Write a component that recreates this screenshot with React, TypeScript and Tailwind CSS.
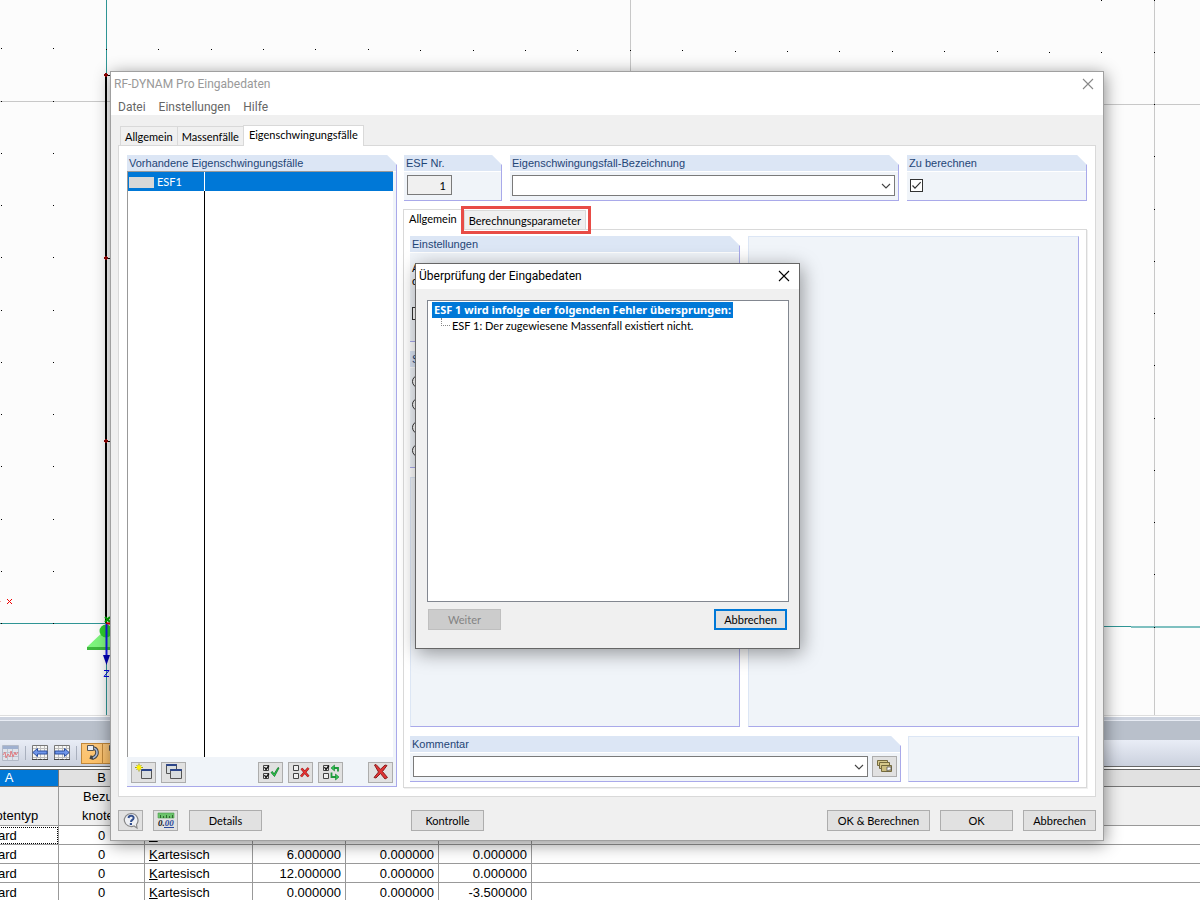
import React, { useState } from 'react';
import clsx from 'clsx';

interface NodeRow {
  type: string;
  ref: number;
  system: string;
  x: string;
  y: string;
  z: string;
}

const ROWS: NodeRow[] = [
  { type: 'Standard', ref: 0, system: 'Kartesisch', x: '0.000000', y: '0.000000', z: '0.000000' },
  { type: 'Standard', ref: 0, system: 'Kartesisch', x: '6.000000', y: '0.000000', z: '0.000000' },
  { type: 'Standard', ref: 0, system: 'Kartesisch', x: '12.000000', y: '0.000000', z: '0.000000' },
  { type: 'Standard', ref: 0, system: 'Kartesisch', x: '0.000000', y: '0.000000', z: '-3.500000' },
];

const MAIN_TABS = ['Allgemein', 'Massenfälle', 'Eigenschwingungsfälle'];
const SOLVERS = ['Lanczos', 'Polynom', 'Unterraum', 'ICG'];

// grid dots of the work plane, slightly tilted to the right
const DOTS = Array.from({ length: 13 }, (_, row) =>
  Array.from({ length: 23 }, (_, col) => ({
    x: Math.round(1 + col * 52.4),
    y: Math.round(-4 + row * 52.25 + col * 0.17),
  }))
).flat();

const Canvas: React.FC = () => (
  <svg className="block h-full w-full" shapeRendering="crispEdges" aria-hidden="true">
    <path d="M0 101.500H110M1103 104.500H1200M630.500 0V80M1154.500 0V715" stroke="#c8c8c8" />
    <path d="M0 623.500H110M106.500 0V75M106.500 660V715M1103 626.500H1132" stroke="#2f9595" />
    <path d="M1131 627H2400" stroke="#7fc0c0" strokeWidth="2" />
    {DOTS.map((d) => (
      <rect key={`${d.x}-${d.y}`} x={d.x} y={d.y} width="1" height="1" fill="#000" />
    ))}
    <path d="M106 75V623" stroke="#000" strokeWidth="2" />
    {[75, 258, 441].map((y) => (
      <g key={y}>
        <path d={`M106 ${y + 0.5}h6`} stroke="#000" />
        <path d={`M105 ${y - 2}h2v1h1v2h-1v1h-2v-1h-1v-2h1z`} fill="#8b0000" />
      </g>
    ))}
    <g shapeRendering="geometricPrecision">
      <path d="M106 629 87 647v2h30v-2z" fill="#7df57d" />
      <path d="M87 647h30v3H87z" fill="#3db83d" />
      <circle cx="106" cy="631" r="6.500" fill="#2ecc2e" />
      <path d="M105 617l5 5m0-5l-5 5" stroke="#0a0" strokeWidth="2" />
      <path d="M106 623.500h6" stroke="#e00000" strokeWidth="2" />
      <path d="M106.500 624v34" stroke="#1414f0" strokeWidth="2" />
      <path d="M103 655h7l-3.500 10z" fill="#0000b4" />
    </g>
    <path d="M0 601.500h1" stroke="#f3a0a0" />
    <path d="M7 599l5 5m0-5l-5 5" stroke="#f00000" shapeRendering="auto" />
    <path d="M104 670.500h5l-5 6h5" fill="none" stroke="#0000e0" shapeRendering="auto" />
  </svg>
);

const ChartIcon: React.FC = () => (
  <svg width="17" height="17" viewBox="0 0 17 17" aria-hidden="true">
    <path d="M.5.5h16v15H.5z" fill="#dfe3ea" stroke="#b3bac8" />
    <path d="M1 1h15v3H1z" fill="#9fb0cf" />
    <path d="M1 7.500h15M1 11.500h15M5.500 4v11M10.500 4v11" stroke="#bcc3cf" />
    <path d="M1 10l2-3 1 6 2-4 2 3 1-6 2 6 2-5 1 3 2-3" fill="none" stroke="#e07d82" />
  </svg>
);

const TableArrowIcon: React.FC<{ back?: boolean }> = ({ back }) => (
  <svg width="16" height="16" viewBox="0 0 16 16" aria-hidden="true">
    <path d="M.5.500h15v14H.5z" fill="#f6f6f4" stroke="#777" />
    <path d="M1 3.500h14M1 12.500h14M4.500 1v13M8.500 1v13M12.500 1v13" stroke="#bdbdbd" />
    <path d="M0 14.500h5M6 14.500h4M11 14.500h5" stroke="#444" />
    <path
      d={back ? 'M.8 7.500L5.500 3.500v2.500h9.500v3H5.500v2.500z' : 'M15.200 7.500L10.500 3.500v2.500H1v3h9.500v2.500z'}
      fill="#6f96ea"
      stroke="#2d4f9f"
    />
  </svg>
);

const LinkIcon: React.FC = () => (
  <svg width="20" height="20" viewBox="0 0 20 20" aria-hidden="true">
    <path d="M10 5c6 0 7 7 1 10l-3-1" fill="none" stroke="#444" strokeWidth="3.600" />
    <path d="M10 5c6 0 7 7 1 10" fill="none" stroke="#a9bbda" strokeWidth="1.600" />
    <path d="M5.500 2.500h6v5h-6z" fill="#e6ecf6" stroke="#555" />
  </svg>
);

const NewIcon: React.FC = () => (
  <svg width="18" height="18" viewBox="0 0 18 18" aria-hidden="true">
    <path d="M6.500 6.500h10v9h-10z" fill="#d9dddf" stroke="#555" />
    <path d="M6.500 6.500h10v1h-10z" fill="#3556a8" stroke="#2c468a" />
    <path d="M4 .5v8M0 4.500h8M1.500 2l5 5M6.500 2l-5 5" stroke="#a3a000" />
    <circle cx="4" cy="4.500" r="2.300" fill="#fff200" />
  </svg>
);

const CopyIcon: React.FC = () => (
  <svg width="18" height="18" viewBox="0 0 18 18" aria-hidden="true">
    <path d="M1.500 1.500h10v9h-10z" fill="#d9dddf" stroke="#555" />
    <path d="M1.500 1.500h10v1h-10z" fill="#3556a8" stroke="#2c468a" />
    <path d="M5.500 6.500h11v9h-11z" fill="#d9dddf" stroke="#555" />
    <path d="M5.500 6.500h11v1h-11z" fill="#3556a8" stroke="#2c468a" />
  </svg>
);

const CheckPair: React.FC<{ top?: boolean; bottom?: boolean }> = ({ top, bottom }) => (
  <>
    <path d="M1.500 2.500h5v5h-5zM1.500 10.500h5v5h-5z" fill="#eee" stroke="#444" />
    {top && <path d="M2.500 4l1.500 2.500L7 2.500" fill="none" stroke="#111" strokeWidth="1.300" />}
    {bottom && <path d="M2.500 12l1.500 2.500 3-4" fill="none" stroke="#111" strokeWidth="1.300" />}
  </>
);

const SelectAllIcon: React.FC = () => (
  <svg width="18" height="18" viewBox="0 0 18 18" aria-hidden="true">
    <CheckPair top bottom />
    <path d="M9 9.500l1.500-1 1.500 2.500 4-6.500 1 .5-4.500 8.500z" fill="#2bd14c" stroke="#12752a" strokeWidth=".8" />
  </svg>
);

const DeselectAllIcon: React.FC = () => (
  <svg width="18" height="18" viewBox="0 0 18 18" aria-hidden="true">
    <CheckPair />
    <path d="M9.500 5.500l7 8m0-8.500l-7.500 8.500" stroke="#8e1a1a" strokeWidth="2.600" />
    <path d="M9.500 5.500l7 8m0-8.500l-7.500 8.500" stroke="#ea3434" strokeWidth="1.400" />
  </svg>
);

const InvertIcon: React.FC = () => (
  <svg width="18" height="18" viewBox="0 0 18 18" aria-hidden="true">
    <CheckPair top />
    <path d="M16 8.500V5h-4.500M9.500 9.500v4.500H14" fill="none" stroke="#1f9a3c" strokeWidth="1.800" />
    <path d="M12.500 2v6L9 5zM13.500 11v6l3.500-3z" fill="#2fc453" stroke="#157a2c" strokeWidth=".6" />
  </svg>
);

const DeleteIcon: React.FC = () => (
  <svg width="18" height="18" viewBox="0 0 18 18" aria-hidden="true">
    <path
      d="M2.500 2l1.500-.5 4.500 4.800 4.500-4.300 2 .5-4.500 6 5 6-2.500 1.500-4.500-5.500-4.500 4.500L2 14.500 6.500 9z"
      fill="#e03434"
      stroke="#8a2020"
    />
  </svg>
);

const HelpIcon: React.FC = () => (
  <svg width="18" height="18" viewBox="0 0 18 18" aria-hidden="true">
    <path d="M9 1.500a7 6.500 0 1 0 3 12.500l3 2-.5-3.500A6.800 6.800 0 0 0 9 1.500z" fill="#eef0f4" stroke="#888" strokeWidth="1.200" />
    <path d="M6.500 6c.5-3.500 6-2.500 5 .5-.5 1.500-2.500 1.500-2.500 3.500" fill="none" stroke="#34508e" strokeWidth="2" />
    <path d="M7.800 11H10v2H7.800z" fill="#34508e" />
  </svg>
);

const UnitsIcon: React.FC = () => (
  <svg width="18" height="18" viewBox="0 0 18 18" aria-hidden="true">
    <path d="M1 1h16v5H1z" fill="#6cc36c" stroke="#4a9c4a" strokeWidth=".6" />
    <path d="M3.500 3v3M6.500 4v2M9.500 3v3M12.500 4v2M15.500 3v3" stroke="#2f6b2f" />
    <text x="1" y="14" fontSize="9" fontStyle="italic" fontWeight="bold" fontFamily="Liberation Serif, serif" fill="#111">
      0.<tspan fill="#2b4a9b">00</tspan>
    </text>
    <path d="M7 15.500h10" stroke="#2b4a9b" />
  </svg>
);

const CardsIcon: React.FC = () => (
  <svg width="18" height="18" viewBox="0 0 18 18" aria-hidden="true">
    <path d="M1.500 2.500h10v5h-10z" fill="#d6c98c" stroke="#746a3e" />
    <path d="M3.500 4.500h10v6h-10z" fill="#d6c98c" stroke="#746a3e" />
    <path d="M5.500 7.500h10v6h-10z" fill="#cdbf80" stroke="#746a3e" />
    <path d="M11 9h4v3h-2l-2 1z" fill="#fff" stroke="#555" strokeWidth=".8" />
  </svg>
);

const CloseIcon: React.FC<{ className?: string }> = ({ className }) => (
  <svg width="12" height="12" viewBox="0 0 12 12" className={className} aria-hidden="true">
    <path d="M1 1l10 10M11 1L1 11" stroke="currentColor" strokeWidth="1.100" />
  </svg>
);

const PushButton: React.FC<React.ButtonHTMLAttributes<HTMLButtonElement>> = ({ className, ...props }) => (
  <button
    type="button"
    className={clsx(
      'flex h-[21px] shrink-0 items-center justify-center border border-[#adadad] bg-[#e1e1e1] text-[11px] leading-4 whitespace-nowrap hover:border-[#0078d7]',
      className
    )}
    {...props}
  />
);

const Tab: React.FC<{ label: string; active: boolean; onClick: () => void }> = ({ label, active, onClick }) => (
  <button
    type="button"
    role="tab"
    aria-selected={active}
    onClick={onClick}
    className={clsx(
      '-ml-px border border-b-0 border-[#d9d9d9] text-[11px] leading-4 whitespace-nowrap',
      active ? 'relative -mb-px h-[21px] bg-white px-[5px] pb-[3px]' : 'h-[19px] bg-[#f0f0f0] px-1 pt-[2px]'
    )}
  >
    {label}
  </button>
);

const Group: React.FC<{ title: string; htmlFor?: string; className?: string; children?: React.ReactNode }> = ({
  title,
  htmlFor,
  className,
  children,
}) => (
  <section
    className={clsx(
      'flex flex-col border-r border-b border-[#a9a9ea] bg-[#f0f4f9] [clip-path:polygon(0_0,calc(100%-10px)_0,100%_10px,100%_100%,0_100%)]',
      className
    )}
  >
    <label
      htmlFor={htmlFor}
      className="block h-[17px] shrink-0 border-b border-white bg-[#dce6f5] pl-[2px] font-['Liberation_Sans',Arial,sans-serif] text-[11px] leading-4 text-[#1f4576]"
    >
      {title}
    </label>
    {children}
  </section>
);

const EmptyPanel: React.FC<{ className?: string }> = ({ className }) => (
  <div className={clsx('border border-t-[#dce6f5] border-r-[#a9a9ea] border-b-[#a9a9ea] border-l-[#dce6f5] bg-[#f0f4f9]', className)} />
);

const Combo: React.FC<{ id: string; className?: string }> = ({ id, className }) => (
  <div className={clsx('relative h-[21px]', className)}>
    <select id={id} className="block h-full w-full appearance-none border border-[#7a7a7a] bg-white px-1 text-[11px]">
      <option value=""></option>
    </select>
    <svg width="10" height="6" viewBox="0 0 10 6" className="pointer-events-none absolute top-2 right-1" aria-hidden="true">
      <path d="M1 1l4 4 4-4" fill="none" stroke="#444" strokeWidth="1.100" />
    </svg>
  </div>
);

const NodeTable: React.FC = () => (
  <div className="h-[185px] shrink-0 overflow-hidden border-t border-[#dedede] bg-[#f0f0f0]">
    <div className="h-[5px] border-t border-b border-t-white border-b-[#e8ecf4] bg-[#cdd3df]" />
    <div className="h-[19px] bg-[#b9c0cb]" />
    <div className="flex h-[26px] items-center gap-[6px] bg-gradient-to-b from-[#e9edf6] to-[#cbd1de] pl-[2px]">
      <ChartIcon />
      <span className="h-[14px] w-px bg-[#a9b0be]" />
      <span className="flex gap-[6px]">
        <TableArrowIcon back />
        <TableArrowIcon />
      </span>
      <span className="h-[14px] w-px bg-[#a9b0be]" />
      <span className="-ml-[2px] flex">
        <span className="flex h-[21px] w-[22px] items-center justify-center border border-[#c0873a] bg-gradient-to-b from-[#fbc77c] to-[#fdc169]">
          <LinkIcon />
        </span>
        <span className="flex h-[21px] w-[22px] items-center justify-center border border-l-0 border-[#c0873a] bg-gradient-to-b from-[#fbc77c] to-[#fdc169]">
          <LinkIcon />
        </span>
      </span>
    </div>
    <div className="h-1 border-t border-b border-[#666] bg-white" />
    <div className="-ml-10">
      <table className="w-[calc(100%+1px)] table-fixed border-separate border-spacing-0 bg-white font-['Liberation_Sans',Arial,sans-serif] text-[13px] leading-4">
        <colgroup>
          <col className="w-[99px]" />
          <col className="w-[86px]" />
          <col className="w-[108px]" />
          <col className="w-[93px]" />
          <col className="w-[93px]" />
          <col className="w-[93px]" />
          <col />
        </colgroup>
        <thead>
          <tr className="bg-[#e1e1e1] [&>th]:h-[17px] [&>th]:border-r [&>th]:border-b [&>th]:border-[#777] [&>th]:p-0 [&>th]:font-normal">
            <th className="bg-[#0078d7] text-white">A</th>
            <th>B</th>
            <th></th>
            <th></th>
            <th></th>
            <th></th>
            <th></th>
          </tr>
          <tr className="bg-[#f0f0f0] [&>th]:h-[39px] [&>th]:border-r [&>th]:border-b [&>th]:border-[#999] [&>th]:p-0 [&>th]:align-top [&>th]:leading-[19px] [&>th]:font-normal">
            <th>
              <br />
              Knotentyp
            </th>
            <th>
              Bezug
              <br />
              knoten
            </th>
            <th></th>
            <th></th>
            <th></th>
            <th></th>
            <th></th>
          </tr>
        </thead>
        <tbody>
          {ROWS.map((row, i) => (
            <tr
              key={i}
              className="[&>td]:h-[19px] [&>td]:border-r [&>td]:border-b [&>td]:border-[#999] [&>td]:px-1 [&>td]:pt-[2px] [&>td]:pb-0"
            >
              <td className={clsx(i === 0 && 'outline-1 -outline-offset-2 outline-dotted outline-black')}>{row.type}</td>
              <td className="text-center">{row.ref}</td>
              <td>
                <span className="underline">K</span>
                {row.system.slice(1)}
              </td>
              <td className="text-right">{row.x}</td>
              <td className="text-right">{row.y}</td>
              <td className="text-right">{row.z}</td>
              <td></td>
            </tr>
          ))}
        </tbody>
      </table>
    </div>
  </div>
);

const CaseList: React.FC = () => (
  <Group title="Vorhandene Eigenschwingungsfälle" className="mb-px w-[270px] shrink-0">
    <div className="-mt-px mr-[3px] flex flex-1 flex-col border-t border-l border-[#999] bg-white">
      <div className="flex h-[19px] items-center bg-[#0078d7] text-[11px] text-white">
        <span className="flex h-full w-[77px] items-center gap-[3px] border-r border-white pt-px pl-px">
          <span className="h-[11px] w-[25px] bg-[#d8d8d8]" />
          ESF1
        </span>
      </div>
      <div className="w-[77px] flex-1 border-r border-black" />
    </div>
    <div className="flex h-[29px] items-center gap-[5px] pt-px pr-[3px] pl-1">
      <PushButton className="w-[25px]" aria-label="Neu"><NewIcon /></PushButton>
      <PushButton className="w-[25px]" aria-label="Kopieren"><CopyIcon /></PushButton>
      <PushButton className="ml-auto w-[25px]" aria-label="Alle auswählen"><SelectAllIcon /></PushButton>
      <PushButton className="w-[25px]" aria-label="Alle abwählen"><DeselectAllIcon /></PushButton>
      <PushButton className="w-[25px]" aria-label="Auswahl umkehren"><InvertIcon /></PushButton>
      <PushButton className="ml-5 w-[25px]" aria-label="Löschen"><DeleteIcon /></PushButton>
    </div>
  </Group>
);

const CaseDetails: React.FC = () => {
  const [tab, setTab] = useState(0);
  const [toSolve, setToSolve] = useState(true);

  return (
    <div className="flex min-w-0 flex-1 flex-col pr-px">
      <div className="flex h-[46px] shrink-0 gap-2 pl-px">
        <Group title="ESF Nr." htmlFor="esf-nr" className="w-[98px]">
          <input
            id="esf-nr"
            defaultValue="1"
            readOnly
            className="mt-[3px] ml-[3px] h-5 w-[45px] border border-[#7a7a7a] bg-[#f0f0f0] px-[5px] text-right text-[11px]"
          />
        </Group>
        <Group title="Eigenschwingungsfall-Bezeichnung" htmlFor="esf-name" className="flex-1">
          <Combo id="esf-name" className="mt-[3px] mr-[3px] ml-[2px]" />
        </Group>
        <Group title="Zu berechnen" htmlFor="esf-solve" className="w-[180px]">
          <span className="relative mt-[7px] ml-[3px] h-[13px] w-[13px]">
            <input
              id="esf-solve"
              type="checkbox"
              checked={toSolve}
              onChange={() => setToSolve(!toSolve)}
              className="block h-full w-full appearance-none border border-[#333] bg-white"
            />
            {toSolve && (
              <svg width="13" height="13" viewBox="0 0 13 13" className="pointer-events-none absolute inset-0" aria-hidden="true">
                <path d="M2.500 6.500L5 9.200l5.700-6" fill="none" stroke="#333" strokeWidth="1.200" />
              </svg>
            )}
          </span>
        </Group>
      </div>

      <div className="flex h-7 shrink-0 items-end gap-[2px] pl-px" role="tablist">
        <Tab label="Allgemein" active={tab === 0} onClick={() => setTab(0)} />
        <div className="relative z-10 flex">
          <Tab label="Berechnungsparameter" active={tab === 1} onClick={() => setTab(1)} />
          <span className="pointer-events-none absolute -top-1 -right-[5px] -bottom-[5px] -left-1 border-3 border-[#e84c46]" />
        </div>
      </div>

      <div className="flex flex-1 flex-col gap-[9px] border border-[#d9d9d9] bg-white pt-[6px] pr-[7px] pb-[5px] pl-[6px] shadow-[1px_1px_0_#f0f0f0]">
        <div className="flex flex-1 gap-2">
          <div className="flex w-[330px] shrink-0 flex-col gap-[9px]">
            <Group title="Einstellungen" className="h-[106px]">
              <div className="flex flex-col pt-2 pl-[2px] text-[11px] leading-[13px]">
                <span>Anzahl</span>
                <span>der Eigenwerte</span>
                <input type="checkbox" aria-label="Eigenfrequenzen" className="mt-5 h-[13px] w-[13px] appearance-none border border-[#333] bg-white" />
              </div>
            </Group>
            <Group title="Solver" className="h-[117px]">
              <div className="flex flex-col gap-[10px] pt-[7px] pl-[2px]">
                {SOLVERS.map((name) => (
                  <input
                    key={name}
                    type="radio"
                    name="solver"
                    aria-label={name}
                    className="h-[13px] w-[13px] appearance-none rounded-full border border-[#333] bg-white"
                  />
                ))}
              </div>
            </Group>
            <EmptyPanel className="flex-1" />
          </div>
          <EmptyPanel className="flex-1" />
        </div>
        <div className="flex h-[46px] shrink-0 gap-[7px]">
          <Group title="Kommentar" htmlFor="comment" className="flex-1">
            <div className="flex gap-1 pt-[3px] pr-[3px] pl-[3px]">
              <Combo id="comment" className="flex-1" />
              <PushButton className="w-[25px]" aria-label="Kommentare"><CardsIcon /></PushButton>
            </div>
          </Group>
          <EmptyPanel className="w-[171px]" />
        </div>
      </div>
    </div>
  );
};

const MainWindow: React.FC = () => {
  const [tab, setTab] = useState(2);

  return (
    <div className="absolute top-[71px] right-[96px] bottom-[59px] left-[110px] flex flex-col border border-[#a0a0a0] bg-[#f0f0f0] shadow-[1px_3px_16px_rgba(0,0,0,0.45)]">
      <div className="flex h-6 shrink-0 items-center justify-between bg-white pr-[9px] pl-[3px] font-['Roboto',sans-serif] text-[12px] text-[#999]">
        <span>RF-DYNAM Pro Eingabedaten</span>
        <button type="button" aria-label="Schließen"><CloseIcon className="text-[#888]" /></button>
      </div>
      <nav className="flex h-[19px] shrink-0 items-center gap-[13px] bg-white pt-[3px] pl-[7px] font-['Roboto',sans-serif] text-[12px] leading-4 text-[#666]">
        <button type="button">Datei</button>
        <button type="button">Einstellungen</button>
        <button type="button">Hilfe</button>
      </nav>
      <div className="flex h-[30px] shrink-0 items-end pl-[10px]" role="tablist">
        {MAIN_TABS.map((label, i) => (
          <Tab key={label} label={label} active={tab === i} onClick={() => setTab(i)} />
        ))}
      </div>
      <div className="mx-[7px] flex min-h-0 flex-1 gap-[6px] border border-[#d9d9d9] bg-white pt-[9px] pr-[7px] pb-2 pl-2">
        <CaseList />
        <CaseDetails />
      </div>
      <div className="flex shrink-0 items-center px-[7px] pt-[13px] pb-[9px]">
        <PushButton className="w-[25px]" aria-label="Hilfe"><HelpIcon /></PushButton>
        <PushButton className="ml-[10px] w-[25px]" aria-label="Einheiten"><UnitsIcon /></PushButton>
        <PushButton className="ml-[11px] w-[73px]">Details</PushButton>
        <PushButton className="ml-[149px] w-[73px]">Kontrolle</PushButton>
        <div className="ml-auto flex gap-[10px]">
          <PushButton className="w-[103px]">OK &amp; Berechnen</PushButton>
          <PushButton className="w-[73px]">OK</PushButton>
          <PushButton className="w-[73px]">Abbrechen</PushButton>
        </div>
      </div>
    </div>
  );
};

const CheckDialog: React.FC = () => (
  <div
    role="dialog"
    aria-label="Überprüfung der Eingabedaten"
    className="absolute top-[263px] left-[415px] flex w-[385px] flex-col border border-[#666] bg-[#f0f0f0] shadow-[2px_4px_18px_rgba(0,0,0,0.4)]"
  >
    <div className="flex h-[25px] items-center justify-between bg-white pr-[9px] pb-px pl-[3px] font-['Roboto',sans-serif] text-[12px]">
      <span>Überprüfung der Eingabedaten</span>
      <button type="button" aria-label="Schließen"><CloseIcon /></button>
    </div>
    <div className="mt-[11px] mr-[10px] ml-[11px] h-[302px] border border-[#828790] bg-white pt-px pl-1 text-[11px] leading-4">
      <span className="inline-block bg-[#0078d7] px-[2px] font-['Noto_Sans',sans-serif] font-bold text-white">
        ESF 1 wird infolge der folgenden Fehler übersprungen:
      </span>
      <div className="flex pl-[9px]">
        <span className="mr-[2px] h-2 w-[9px] border-b border-l border-dotted border-[#888]" />
        ESF 1: Der zugewiesene Massenfall existiert nicht.
      </div>
    </div>
    <div className="flex justify-between px-3 pt-[7px] pb-[18px]">
      <PushButton disabled className="w-[73px] border-[#bfbfbf]! bg-[#cccccc]! text-[#838383]">Weiter</PushButton>
      <PushButton className="w-[73px] border-2 border-[#0078d7]!">Abbrechen</PushButton>
    </div>
  </div>
);

export default function App() {
  return (
    <div className="relative flex h-screen flex-col overflow-hidden bg-[#fcfcfc] font-['Lato',sans-serif] text-black">
      <div className="min-h-0 flex-1">
        <Canvas />
      </div>
      <NodeTable />
      <MainWindow />
      <CheckDialog />
    </div>
  );
}
